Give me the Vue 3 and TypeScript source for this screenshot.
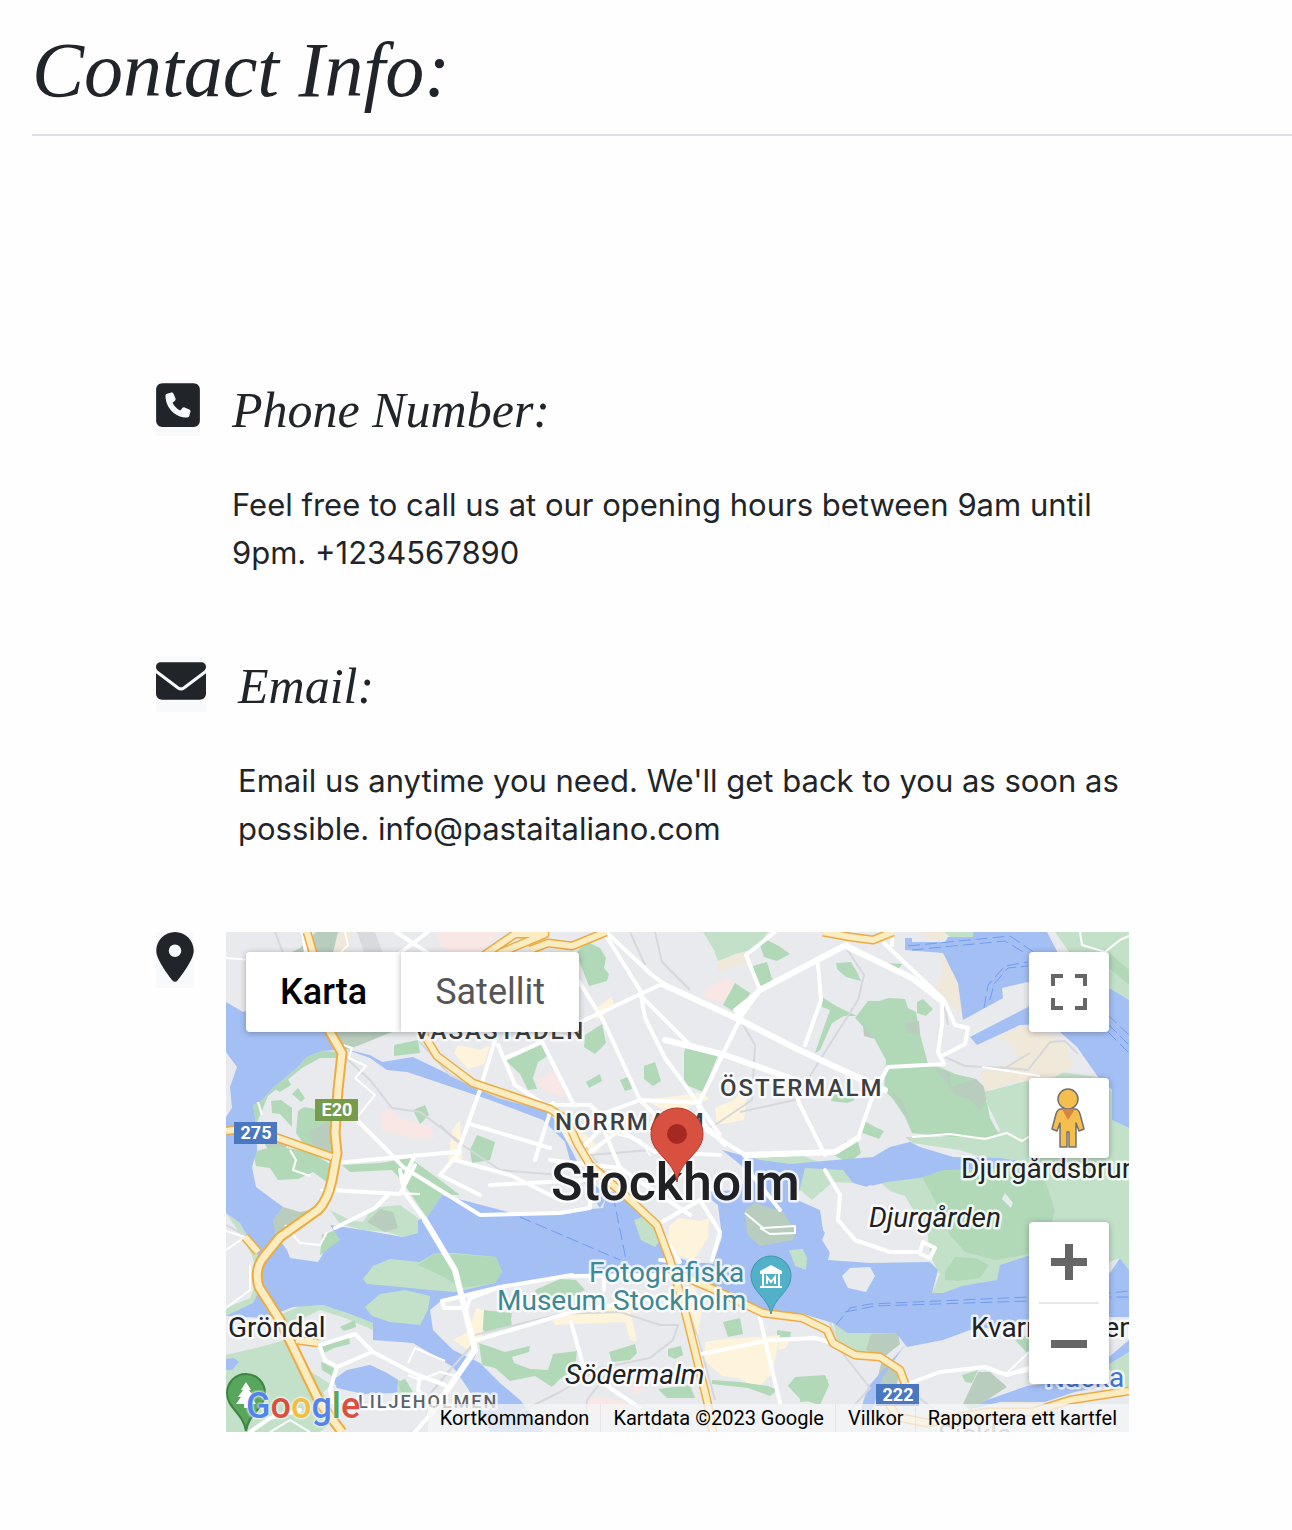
<script setup lang="ts">
import { ref } from 'vue'

interface Shape {
  kind: string
  d: string
}

interface Label {
  kind: string
  x: number
  y: number
  text: string
}

interface Shield {
  x: number
  y: number
  text: string
  color: string
}

const mapType = ref<'map' | 'satellite'>('map')

const areas: Shape[] = [
  // districts north of the water
  { kind: 'sand', d: 'M340 932H352L346 953H333Z' },
  { kind: 'dark', d: 'M316 932H338L333 953H290L300 948Z' },
  { kind: 'rail', d: 'M357 932H375L383 953H364Z' },
  { kind: 'pink', d: 'M436 932H500L480 953H450L440 945Z' },
  { kind: 'park', d: 'M576 953L586 941L600 948L606 958L604 968L609 974L607 981L589 986Z' },
  { kind: 'light', d: 'M703 932H768L756 949L735 954L718 962L714 950Z' },
  { kind: 'sand', d: 'M717 961L735 955L755 949L745 964L731 968L718 972Z' },
  { kind: 'pink', d: 'M706 989L729 977L735 986L722 1003L704 998Z' },
  { kind: 'park', d: 'M735 983L750 993L745 1004L736 1013L723 1005Z' },
  { kind: 'park', d: 'M763 938L779 946L790 954L777 961L764 957L760 945ZM753 966L767 962L773 982L762 988L754 974Z' },
  { kind: 'park', d: 'M836 963L851 962L857 972L861 981L846 977L837 969ZM886 963L902 964L898 970L887 966Z' },
  { kind: 'park', d: 'M822 997L836 1006L857 1016L844 1016L832 1023L820 1050L815 1053L830 1010L822 1007Z' },
  { kind: 'park', d: 'M855 1018L868 1001L879 1001L889 998L905 999L908 1008L916 1012L920 1034L928 1064L942 1068L955 1074L976 1079L987 1103L990 1118L999 1134L981 1140L940 1136L912 1133L905 1117L893 1099L884 1090L886 1060L874 1038Z' },
  { kind: 'dark', d: 'M905 1023L919 1021L920 1034L907 1033ZM863 1025L875 1039L864 1036ZM890 1091L902 1100L912 1124L905 1113ZM935 1068L950 1073L950 1087L976 1079L991 1093L980 1110L970 1100L955 1094Z' },
  { kind: 'park', d: 'M917 1002L923 999L933 1009L926 1016L917 1013Z' },
  { kind: 'park', d: 'M834 1093L850 1094L855 1100L847 1103L831 1101ZM863 1120L875 1127L884 1131L879 1139L860 1132Z' },
  { kind: 'light', d: 'M985 1092L1060 1072L1098 1077L1112 1092V1120L1129 1128V1270L1120 1258L1109 1262L1075 1250L1029 1257L1000 1267L997 1280L962 1288L943 1293L932 1293L940 1274L933 1262L925 1234L900 1200L880 1182L920 1178L940 1166L990 1160L960 1150L912 1143L905 1137H995L1000 1130L987 1103Z' },
  { kind: 'sand', d: 'M940 953L944 953L958 983L963 1020L956 1008L938 998L937 983L943 972ZM920 932H945L946 940H930ZM998 1038L1020 1026L1045 1033L1065 1042L1073 1067L1055 1077L1010 1083L985 1092L980 1072L1000 1068L1018 1058L1012 1044Z' },
  { kind: 'light', d: 'M1055 932H1129V1000L1109 987L1070 953ZM945 932H973L973 937H950Z' },
  { kind: 'park', d: 'M1109 952L1129 970V985L1109 968Z' },
  { kind: 'park', d: 'M922 1177L950 1166L990 1160L1040 1165L1055 1210L1045 1245L1025 1255L995 1260L965 1252L950 1235L940 1210Z' },
  { kind: 'light', d: 'M745 1170L752 1155H800L828 1165L850 1170L853 1183L833 1182L812 1200L800 1190Z' },
  { kind: 'park', d: 'M832 1154L846 1141L858 1142L861 1153L849 1163Z' },
  { kind: 'park', d: 'M684 1053L687 1044L718 1055L703 1092L684 1084ZM506 1061L542 1044L549 1055L538 1062L533 1078L537 1089L528 1090L520 1074ZM586 1082L600 1074L602 1081L589 1088ZM644 1066L655 1062L661 1081L653 1086L644 1079ZM620 1080L630 1076L632 1089L625 1091ZM585 1035L602 1024L606 1043L595 1054L584 1047Z' },
  { kind: 'pink', d: 'M537 1080L555 1070L566 1092L561 1097L541 1089ZM380 1114L389 1109L400 1118L431 1127L435 1138L413 1139L382 1130Z' },
  { kind: 'park', d: 'M470 1150L477 1135L495 1142L490 1160L472 1163ZM413 1110L425 1105L429 1115L420 1124Z' },
  { kind: 'built', d: 'M598 1007L612 996L614 1008L596 1020ZM454 1053L458 1045L480 1050L490 1045L484 1064L468 1069ZM645 1100L700 1093L710 1099L690 1106L680 1118L660 1108ZM715 1108L735 1099L742 1090L748 1080L744 1120L717 1125ZM452 1130L460 1120L462 1160L448 1163ZM553 1130L580 1130L600 1148L590 1160Z' },
  { kind: 'park', d: 'M394 1045L418 1040L420 1053L394 1056Z' },
  { kind: 'dark', d: 'M333 1032H392L360 1045L345 1050Z' },
  // Kungsholmen and the western islands
  { kind: 'park', d: 'M338 1052L322 1051L307 1057L297 1068L273 1088L260 1102L253 1105L256 1125L268 1096L285 1082L302 1068L320 1058L338 1058Z' },
  { kind: 'park', d: 'M271 1101L281 1100L292 1108L292 1127L280 1114L272 1113ZM298 1111L304 1107L333 1112V1154L320 1152L303 1143L296 1133ZM275 1089L288 1079L291 1085L280 1092ZM292 1094L298 1088L305 1098L301 1102Z' },
  { kind: 'dark', d: 'M310 1131L332 1119V1154L314 1151ZM262 1138L290 1140L284 1151L268 1150Z' },
  { kind: 'park', d: 'M253 1152L275 1146L310 1152L332 1165L328 1183L313 1172L298 1179L278 1180L270 1168L256 1166Z' },
  { kind: 'park', d: 'M342 1165L380 1163L410 1158L440 1180L460 1195L442 1195L427 1217L420 1208L403 1182L392 1170L350 1172Z' },
  { kind: 'light', d: 'M330 1210L350 1220L363 1222L372 1208L400 1205L418 1218V1233L403 1237L387 1232L363 1230L340 1224Z' },
  { kind: 'dark', d: 'M273 1220L283 1207L300 1212L315 1209L305 1226L287 1238L274 1233ZM367 1222L380 1209L393 1212L398 1228L385 1232Z' },
  { kind: 'light', d: 'M226 1213L240 1223L257 1253L265 1283L254 1303L226 1316V1308L250 1298L258 1280L252 1255L239 1232Z' },
  { kind: 'park', d: 'M322 1235L336 1230L341 1242L327 1251L320 1255Z' },
  // Södermalm
  { kind: 'park', d: 'M535 1290L560 1279L576 1280L585 1290L562 1302L538 1300ZM500 1315L510 1312L512 1326L500 1328ZM723 1322L740 1318L743 1334L728 1337ZM777 1330L791 1332L790 1338L777 1337ZM478 1316L482 1310L512 1313L510 1326L484 1332Z' },
  { kind: 'built', d: 'M705 1342L725 1339L758 1337L780 1335L775 1360L772 1374L757 1388L738 1378L722 1376L704 1360ZM692 1280L702 1310L697 1340L686 1330ZM552 1318L605 1307L630 1308L637 1342L630 1340L625 1322L555 1325ZM453 1340L468 1332L476 1308L484 1310L482 1340L468 1350ZM780 1340H790L786 1348L778 1350Z' },
  { kind: 'park', d: 'M479 1343L505 1352L530 1346L529 1352L512 1357L514 1363L530 1369L548 1370L553 1354L577 1351L575 1369L560 1379L552 1387L535 1376L510 1381L495 1368L482 1365ZM609 1352L635 1344L637 1353L630 1360L612 1362ZM668 1349L681 1346L683 1355L675 1359L668 1356ZM658 1389L690 1385L695 1398L667 1398ZM795 1377L825 1375L829 1385L820 1405L800 1399L788 1386ZM712 1380L740 1382L768 1386L778 1390L770 1396L748 1388L712 1384Z' },
  { kind: 'pink', d: 'M585 1400L600 1397L625 1401L625 1415H590ZM630 1387L641 1384L644 1391L632 1394Z' },
  // south-western shore
  { kind: 'light', d: 'M226 1355L260 1347L285 1340L305 1368L332 1385L323 1392L335 1420L320 1432H226ZM280 1315L300 1306L325 1305L373 1323V1330L345 1318L320 1310L290 1325ZM336 1382L347 1371L370 1365L387 1373L398 1380L408 1384L412 1396L394 1395L392 1380L370 1370L350 1375Z' },
  { kind: 'park', d: 'M322 1346L349 1337L350 1344L334 1348L324 1353ZM340 1327L355 1320L356 1327L344 1331ZM398 1382L405 1379L413 1392L402 1395ZM321 1362L334 1368L332 1376L322 1370Z' },
  // south-eastern shore
  { kind: 'light', d: 'M833 1323L847 1333L898 1333L899 1343L880 1358L845 1352L838 1343Z' },
  { kind: 'dark', d: 'M871 1334L898 1333L900 1344L884 1357L866 1350ZM882 1360L900 1370L897 1384H876ZM963 1404L978 1372L990 1372L1007 1387L987 1400L970 1410Z' },
  { kind: 'park', d: 'M962 1375L978 1370L972 1383L965 1382ZM1015 1340L1029 1334V1355ZM800 1378L820 1377L828 1380L822 1400L800 1402Z' },
  { kind: 'sand', d: 'M1003 1405L1020 1398L1040 1398L1030 1410L1003 1415Z' },
  { kind: 'light', d: 'M1109 1360L1129 1352V1392H1109Z' },
]

const waters: string[] = [
  'M226 1002L243 1012L262 1005H322L330 1032L338 1050L322 1051L307 1057L297 1068L273 1088L260 1102L253 1105L256 1125L257 1150L252 1167L256 1187L283 1207L273 1220L275 1233L287 1250L290 1258L318 1262L324 1252L340 1240L330 1225L363 1230L403 1237L418 1233V1220L427 1217L442 1195L470 1202L520 1215L603 1208L608 1190L620 1195L655 1225L667 1253L675 1274H572L500 1287L442 1300L430 1310L433 1330L453 1350L480 1363L500 1383L520 1400L533 1417L543 1432H490L477 1403L467 1387L453 1367L433 1355L413 1343L373 1340V1323L347 1313L323 1305L293 1307L265 1318L226 1316L253 1303L263 1283L257 1253L240 1223L226 1213Z',
  'M345 1049L370 1055L382 1062L413 1057L440 1070L480 1090L550 1113L557 1123L573 1153L585 1178L608 1195L600 1208L588 1190L570 1160L565 1142L543 1120L490 1100L440 1083L407 1072L387 1070L370 1058Z',
  'M722 1150L760 1160L790 1164L835 1160L873 1157L890 1147L910 1142L920 1147L953 1157L1000 1158L1030 1163L1000 1168L943 1170L920 1178L887 1182L867 1187L853 1183L843 1170L805 1168L797 1200L820 1210L823 1230L832 1243L828 1260L870 1263L930 1262L938 1270L932 1293H943L962 1286L997 1280L1000 1265L1040 1252L1110 1273L1120 1258L1129 1270V1317L1105 1317L1030 1323L970 1330L943 1340L907 1347L896 1333L847 1333L833 1323L800 1313H773L750 1303L717 1287L672 1268L676 1258L713 1264L722 1237L718 1205L702 1192L740 1190L747 1170Z',
  'M905 938H912V942H945L948 937H973V932H1047L1060 957L1108 987L1129 1000V1128L1112 1120V1090L1098 1077L1077 1047L1060 1032L1045 1024L1020 1025L977 1045L970 1037L1028 1007L1040 985L1027 982L1002 988L1003 998L963 1020L958 983L943 953L905 950Z',
  'M333 1380L347 1370L370 1365L387 1373L398 1380L397 1393L363 1394L337 1388Z',
  'M907 1343L868 1387L860 1412H872L882 1378L900 1352Z',
  'M968 1410L987 1400L1027 1386L1075 1380L1109 1385L1075 1392L1045 1402L1000 1402Z',
  'M1109 1357L1129 1340V1352L1109 1364ZM226 1359L234 1358L239 1362L232 1370H226Z',
]

const islands: Shape[] = [
  { kind: 'light', d: 'M363 1279L373 1266L390 1259L420 1262L435 1253L455 1253L496 1257L502 1272L495 1283L455 1292L430 1290L390 1286L367 1284Z' },
  { kind: 'park', d: 'M418 1265L435 1253L496 1257L502 1272L495 1283L462 1288L440 1275Z' },
  { kind: 'light', d: 'M365 1307L380 1294L405 1290L430 1296L428 1310L420 1325L390 1322L372 1316Z' },
  { kind: 'light', d: 'M634 1220L642 1217L660 1225L662 1238L655 1247L641 1240Z' },
  { kind: 'dark', d: 'M745 1209L755 1203L783 1212L796 1232L793 1240L760 1246L747 1234Z' },
  { kind: 'light', d: 'M789 1250L803 1249L807 1258L806 1270L795 1266Z' },
  { kind: 'land', d: 'M662 1222L672 1212L700 1200L715 1214L720 1234L713 1262L690 1264L673 1250Z' },
  { kind: 'built', d: 'M669 1226L679 1218L700 1221L709 1218L708 1238L694 1260L680 1256L668 1245Z' },
  { kind: 'land', d: 'M842 1276L850 1268L870 1267L875 1276L866 1292L848 1288Z' },
  { kind: 'park', d: 'M945 1272L955 1257L975 1258L989 1265L980 1278L958 1281L945 1280Z' },
  { kind: 'land', d: 'M1005 1193L1013 1203L1011 1208L1002 1199ZM822 1240L838 1200L870 1185L905 1196L928 1235L929 1260L870 1260L832 1256Z' },
  { kind: 'dark', d: 'M470 1353L478 1347L474 1360Z' },
  { kind: 'land', d: 'M226 1052L237 1067L230 1087L232 1108L226 1117Z' },
]

const railways: string[] = [
  'M275 932L283 953', 'M345 1057L370 1080L392 1108L420 1112L460 1142', 'M418 1040L450 1075L500 1098L560 1112L610 1180',
  'M655 932L662 962L690 990', 'M630 932L645 965', 'M738 1016L755 1045L752 1100L715 1125L650 1150L590 1155',
  'M846 948L864 975L858 1000L820 1060L795 1100L740 1112', 'M945 1057L965 1066L1005 1068L1030 1053M1000 1067L1028 1070L1050 1042L1065 1041L1078 1054',
  'M890 948L944 1002L948 1025', 'M475 1335L560 1314L620 1312L660 1325L678 1325L673 1340L650 1358L600 1368L560 1392L520 1412',
  'M425 1400L450 1370L475 1342L500 1332', 'M690 1315L700 1345L715 1400', 'M830 1322L840 1350L870 1388L850 1410', 'M226 1225L245 1235',
  'M585 1432L587 1400L610 1370', 'M440 1125L455 1140L500 1170L560 1175', 'M910 1390L940 1415',
]

const sideStreets: string[] = [
  'M226 958L250 960', 'M345 932L348 945L340 953', 'M343 1045L352 1048L349 1058L366 1066L355 1078L375 1095L355 1120',
  'M258 1102L262 1115M290 1150L296 1160L293 1170L310 1176', 'M226 1250L245 1237L226 1231M250 1265V1290L226 1308',
  'M285 1225L300 1243L320 1245L327 1232', 'M320 1190L420 1194', 'M408 1363L415 1348L445 1361',
  'M320 1405L350 1400L380 1410L420 1405L400 1400', 'M912 1137L950 1134L985 1139L1007 1133L1022 1141L1030 1136',
  'M982 1067L1040 1076', 'M1080 932L1082 945L1105 952L1120 940L1129 936', 'M1007 1375L1029 1371M1007 1373L1029 1352',
  'M745 1213L763 1228L795 1226L795 1233L770 1234L760 1228', 'M600 1130L640 1140L650 1155', 'M408 1375L420 1380L440 1372L455 1376', 'M270 1432L290 1420L310 1432',
]

const streets: string[] = [
  'M303 932L306 953', 'M396 932L428 953M428 932L400 953', 'M606 932L652 975L670 988L740 1020L795 1048L860 1080L885 1090',
  'M578 980L603 1020L640 1100L660 1120', 'M605 934L640 990L645 1018L665 1058L685 1085L720 1135', 'M578 1023L600 1013L662 984',
  'M640 995L690 1045L725 1055L790 1078L800 1105L825 1155', 'M775 932L746 955L760 990L742 1015L720 1060L698 1105L706 1130L745 1155',
  'M846 945L760 990L735 1010', 'M818 965L821 1000L805 1045', 'M848 947L890 967L912 978L942 1001L942 1025L938 1052L944 1064L888 1067L873 1095L858 1138L835 1152L750 1156',
  'M884 943L944 1000L955 1025L968 1028L965 1044L944 1055', 'M892 932V945', 'M495 1040L480 1090L455 1160L510 1175L560 1200',
  'M498 1045L515 1085L545 1105L590 1105L600 1115L640 1100L700 1103', 'M505 1058L542 1042L573 1103', 'M553 1103L535 1160M470 1124L550 1148',
  'M335 1163L455 1152', 'M355 1118L390 1153L403 1167L480 1215L560 1213L590 1208L590 1190M415 1155L403 1180', 'M330 1190L400 1194L415 1165',
  'M335 1228L375 1208L388 1195', 'M400 1170L404 1192L425 1220L455 1270L475 1350L430 1415L415 1432', 'M572 1275L500 1287L442 1301L444 1308L467 1308L470 1298L500 1287',
  'M477 1340L572 1312L670 1295', 'M604 1275V1290M571 1322L583 1365L610 1388L640 1408', 'M697 1355L770 1340L815 1338L840 1345', 'M758 1310L780 1403', 'M695 1337L710 1400',
  'M550 1160L620 1168L690 1215', 'M590 1152L620 1130L655 1152L720 1155', 'M662 1222L700 1200L720 1232L712 1260', 'M663 1235L680 1262L660 1260',
  'M745 1155L752 1175L780 1210M700 1120L725 1145', 'M825 1170L840 1195L838 1220L855 1240L890 1252H920L923 1242L935 1248L930 1258L920 1254', 'M320 1345L355 1334L373 1352L415 1374L445 1385',
  'M320 1347L325 1360L337 1367L330 1390L332 1400', 'M337 1367L372 1352M420 1375L418 1390L430 1405', 'M905 1385L940 1372L985 1367L1007 1375L1029 1368', 'M250 1432L270 1418L300 1410',
  'M590 1105L608 1122L580 1150', 'M603 1128L620 1168', 'M460 1152L440 1175L480 1195', 'M490 1185L590 1180L620 1170', 'M572 1276L670 1275',
]

const avenues: string[] = [
  'M662 984L740 1020L795 1048L885 1090', 'M665 1040L725 1055L790 1078', 'M846 945L760 990L738 1013', 'M425 1220L455 1270L475 1350L430 1415',
  'M745 1155L835 1152L858 1138', 'M848 947L912 978L942 1001',
]

const highways: string[] = [
  'M307 932L313 953', 'M226 1131L240 1129L275 1137L332 1157',
  'M418 1025L437 1056L473 1083L550 1109L567 1120L577 1143L590 1165L627 1197L657 1225L670 1260L683 1303L693 1343L707 1400L713 1432',
  'M483 956L515 934H545L500 953', 'M530 950L548 943L572 946L606 932', 'M823 932L850 937L873 940L893 932',
  'M680 1275L713 1289L763 1313L802 1318L827 1330L833 1343L855 1355L880 1357L900 1370L905 1384', 'M889 1404L897 1417L927 1423L987 1412L1032 1412L1070 1400L1129 1391',
  'M258 1252L245 1237', 'M296 1340L318 1343',
]

const motorway = 'M324 1010L330 1032L342 1053L338 1090L335 1133L337 1153L332 1180Q328 1200 318 1210L280 1237L263 1258Q254 1270 259 1287L280 1320L320 1403L342 1432'

const ferries: string[] = [
  'M520 1217L620 1260', 'M613 1195L627 1265', 'M908 946L1010 936L1035 953', 'M912 950L1005 941L1025 953',
  'M984 1008L988 985L1005 966L1028 962', 'M990 1000L994 984L1008 968L1028 966', 'M836 1325L850 1308L870 1304L1029 1297H1129', 'M845 1312L875 1306L1029 1301L1129 1291',
  'M1108 1015L1129 1035M1108 1024L1129 1045M1108 1032L1129 1053',
]

const labels: Label[] = [
  { kind: 'district', x: 414, y: 1039, text: 'VASASTADEN' },
  { kind: 'district', x: 555, y: 1130, text: 'NORRMALM' },
  { kind: 'district', x: 720, y: 1096, text: 'ÖSTERMALM' },
  { kind: 'suburb', x: 358, y: 1408, text: 'LILJEHOLMEN' },
  { kind: 'city', x: 551, y: 1200, text: 'Stockholm' },
  { kind: 'place', x: 961, y: 1178, text: 'Djurgårdsbrunn' },
  { kind: 'place', x: 228, y: 1337, text: 'Gröndal' },
  { kind: 'place', x: 971, y: 1337, text: 'Kvarnholmen' },
  { kind: 'island', x: 869, y: 1227, text: 'Djurgården' },
  { kind: 'island', x: 565, y: 1384, text: 'Södermalm' },
  { kind: 'museum', x: 589, y: 1282, text: 'Fotografiska' },
  { kind: 'museum', x: 497, y: 1310, text: 'Museum Stockholm' },
  { kind: 'nacka', x: 1045, y: 1387, text: 'Nacka' },
  { kind: 'sickla', x: 938, y: 1444, text: 'Sickla' },
]

const shields: Shield[] = [
  { x: 315, y: 1099, text: 'E20', color: '#759b4b' },
  { x: 234, y: 1122, text: '275', color: '#4a78c0' },
  { x: 876, y: 1384, text: '222', color: '#4a78c0' },
]
</script>

<template>
  <main class="page">
    <header class="page-header">
      <h1>Contact Info:</h1>
    </header>

    <section class="contacts">
      <article class="contact">
        <span class="icon">
          <svg class="icon-phone" viewBox="0 0 448 512" aria-hidden="true">
            <path d="M64 32C28.7 32 0 60.7 0 96V416c0 35.3 28.7 64 64 64H384c35.3 0 64-28.7 64-64V96c0-35.3-28.7-64-64-64H64zm90.7 96.7c9.7-2.6 19.9 2.3 23.7 11.6l20 48c3.4 8.2 1 17.6-5.8 23.2L168 231.7c16.6 35.2 45.1 63.7 80.3 80.3l20.2-24.7c5.6-6.8 15-9.2 23.2-5.8l48 20c9.3 3.9 14.2 14 11.6 23.7l-12 44C336.9 378 329 384 320 384C196.3 384 96 283.7 96 160c0-9 6-16.9 14.7-19.3l44-12z" />
          </svg>
        </span>
        <div class="details">
          <h2>Phone Number:</h2>
          <p>Feel free to call us at our opening hours between 9am until 9pm. +1234567890</p>
        </div>
      </article>

      <article class="contact">
        <span class="icon">
          <svg class="icon-mail" viewBox="0 0 512 512" aria-hidden="true">
            <path d="M48 64C21.5 64 0 85.5 0 112c0 15.1 7.1 29.3 19.2 38.4L236.8 313.6c11.4 8.5 27 8.5 38.4 0L492.8 150.4c12.1-9.1 19.2-23.3 19.2-38.4c0-26.5-21.5-48-48-48H48zM0 176V384c0 35.3 28.7 64 64 64H448c35.3 0 64-28.7 64-64V176L294.4 339.2c-22.8 17.1-54 17.1-76.8 0L0 176z" />
          </svg>
        </span>
        <div class="details">
          <h2>Email:</h2>
          <p>Email us anytime you need. We'll get back to you as soon as possible. info@pastaitaliano.com</p>
        </div>
      </article>

      <article class="contact">
        <span class="icon">
          <svg class="icon-pin" viewBox="0 0 384 512" aria-hidden="true">
            <path d="M215.7 499.2C267 435 384 279.4 384 192C384 86 298 0 192 0S0 86 0 192c0 87.4 117 243 168.3 307.2c12.3 15.3 35.1 15.3 47.4 0zM192 128a64 64 0 1 1 0 128 64 64 0 1 1 0-128z" />
          </svg>
        </span>

        <div class="map">
          <svg class="canvas" viewBox="226 932 903 500" preserveAspectRatio="xMidYMid slice">
            <path v-for="area in areas" :key="area.d" :class="area.kind" :d="area.d" />
            <path v-for="d in waters" :key="d" class="water" :d="d" />
            <path v-for="area in islands" :key="area.d" :class="area.kind" :d="area.d" />
            <path v-for="d in railways" :key="d" class="railway" :d="d" />
            <path v-for="d in ferries" :key="d" class="ferry" :d="d" />
            <path v-for="d in sideStreets" :key="d" class="side-street" :d="d" />
            <path v-for="d in streets" :key="d" class="street" :d="d" />
            <path v-for="d in avenues" :key="d" class="avenue" :d="d" />
            <path v-for="d in highways" :key="d" class="highway-edge" :d="d" />
            <path class="motorway-edge" :d="motorway" />
            <path v-for="d in highways" :key="d" class="highway" :d="d" />
            <path class="motorway" :d="motorway" />

            <g v-for="shield in shields" :key="shield.text">
              <rect :x="shield.x" :y="shield.y" width="43" height="22" :fill="shield.color" />
              <text class="shield" :x="shield.x + 22" :y="shield.y + 17">{{ shield.text }}</text>
            </g>

            <!-- nature reserve pin -->
            <path fill="#58a55c" stroke="#3f8444" stroke-width="2" d="M246 1431C243 1412 227 1409 227 1393A19 19 0 0 1 265 1393C265 1409 249 1412 246 1431Z" />
            <path fill="#fff" d="M246 1382L251 1390H249L254 1397H251L256 1404H248V1408H244V1404H236L241 1397H238L243 1390H241Z" />

            <text v-for="label in labels" :key="label.text" :class="['label', label.kind]" :x="label.x" :y="label.y">{{ label.text }}</text>

            <!-- museum pin -->
            <path fill="#52b0c8" stroke="#4097ac" stroke-width="1" d="M771 1314C768 1297 751 1292 751 1276A20 20 0 0 1 791 1276C791 1292 774 1297 771 1314Z" />
            <path fill="#fff" fill-rule="evenodd" d="M771 1265L782 1271V1274H780V1286H782V1288H760V1286H762V1274H760V1271ZM764 1274V1286H778V1274Z" />
            <path fill="none" stroke="#fff" stroke-width="2" d="M767 1284V1277L771 1282L775 1277V1284" />

            <!-- restaurant marker -->
            <path fill="#d85140" stroke="#b1372b" stroke-width="1" d="M677 1182C674 1159 651 1154 651 1134A26 26 0 0 1 703 1134C703 1154 680 1159 677 1182Z" />
            <circle cx="677" cy="1134" r="10" fill="#a52921" />
          </svg>

          <div class="map-types">
            <button type="button" :class="{ active: mapType === 'map' }" @click="mapType = 'map'">Karta</button>
            <button type="button" :class="{ active: mapType === 'satellite' }" @click="mapType = 'satellite'">Satellit</button>
          </div>

          <div class="tools">
            <button type="button" class="tool fullscreen" aria-label="Helskärm">
              <svg width="36" height="36" viewBox="0 0 18 18" aria-hidden="true">
                <path fill="#666" d="M0 0V6H2V2H6V0ZM12 0V2H16V6H18V0ZM16 16H12V18H18V12H16ZM2 12H0V18H6V16H2Z" />
              </svg>
            </button>
            <button type="button" class="tool pegman" aria-label="Street View">
              <svg width="36" height="64" viewBox="0 0 36 64" aria-hidden="true">
                <g fill="#f4bf4f" stroke="#707070" stroke-width="1.5" stroke-linejoin="round">
                  <path d="M10 23H24C27 23 28 25 29 28L33 43L28 45L25 37V61H18V46H16V61H9V37L6 45L1 43L5 28C6 25 7 23 10 23Z" />
                  <circle cx="17" cy="13" r="10" />
                </g>
                <path fill="#d48443" d="M11 23H24L17 34Z" />
              </svg>
            </button>
            <div class="zoom">
              <button type="button" aria-label="Zooma in">
                <svg width="36" height="36" viewBox="0 0 18 18" aria-hidden="true">
                  <path fill="#666" d="M7 0H11V7H18V11H11V18H7V11H0V7H7Z" />
                </svg>
              </button>
              <button type="button" aria-label="Zooma ut">
                <svg width="36" height="36" viewBox="0 0 18 18" aria-hidden="true">
                  <path fill="#666" d="M0 7H18V11H0Z" />
                </svg>
              </button>
            </div>
          </div>

          <a class="brand" href="#" aria-label="Google"><span class="blue">G</span><span class="red">o</span><span class="yellow">o</span><span class="blue">g</span><span class="green">l</span><span class="red">e</span></a>

          <div class="credits">
            <button type="button">Kortkommandon</button>
            <span>Kartdata ©2023 Google</span>
            <a href="#">Villkor</a>
            <a href="#">Rapportera ett kartfel</a>
          </div>
        </div>
      </article>
    </section>
  </main>
</template>

<style>
body {
  margin: 0;
  background: #fefefe;
}
</style>

<style scoped>
.page {
  color: #212529;
  font-family: Inter, "Liberation Sans", sans-serif;
}

.page-header {
  margin-left: 32px;
  padding: 24px 0 18px;
  border-bottom: 2px solid #dee2e6;
}

h1,
h2 {
  margin: 0;
  font-family: "Apple Chancery", "Liberation Serif", serif;
  font-style: italic;
  font-weight: 400;
}

h1 {
  font-size: 78px;
  line-height: 92px;
}

h2 {
  font-size: 50px;
  line-height: 60px;
}

.contacts {
  display: flex;
  flex-direction: column;
  gap: 79px;
  margin: 244px 163px 0 156px;
}

.contact {
  display: flex;
  align-items: flex-start;
  gap: 32px;
}

.icon {
  flex: none;
  height: 56px;
  background: #f8f9fa;
}

.icon svg {
  display: block;
  height: 50px;
  fill: #212529;
}

.icon-phone {
  width: 44px;
}

.icon-mail {
  width: 50px;
}

.icon-pin {
  width: 38px;
}

.details {
  flex: 1;
  min-width: 0;
}

p {
  margin: 41px 0 0;
  font-size: 31px;
  line-height: 48px;
}

.map {
  position: relative;
  flex: 1;
  min-width: 0;
  height: 500px;
  overflow: hidden;
  background: #e8eaed;
  font-family: Roboto, "Liberation Sans", sans-serif;
}

.canvas {
  display: block;
  width: 100%;
  height: 100%;
}

.land { fill: #e8eaed; }
.water { fill: #a3bff4; }
.park { fill: #b1d9b8; }
.light { fill: #c3e1c9; }
.dark { fill: #b8cdbe; }
.sand { fill: #f0e8d9; }
.pink { fill: #f8e7e4; }
.built { fill: #fef4dc; }
.rail { fill: #d8dadd; }

.railway,
.ferry,
.side-street,
.street,
.avenue,
.highway-edge,
.highway,
.motorway-edge,
.motorway {
  fill: none;
  stroke-linejoin: round;
}

.railway {
  stroke: #d6d8db;
  stroke-width: 2px;
}

.ferry {
  stroke: #739bee;
  stroke-width: 1px;
  stroke-dasharray: 12 5;
}

.side-street {
  stroke: #fff;
  stroke-width: 2px;
}

.street {
  stroke: #fff;
  stroke-width: 4px;
  stroke-linecap: round;
}

.avenue {
  stroke: #fff;
  stroke-width: 6px;
  stroke-linecap: round;
}

.highway-edge {
  stroke: #edac41;
  stroke-width: 9px;
}

.highway {
  stroke: #fcecc2;
  stroke-width: 6px;
}

.motorway-edge {
  stroke: #edac41;
  stroke-width: 11px;
}

.motorway {
  stroke: #fcecc2;
  stroke-width: 7px;
}

.label {
  fill: #202124;
  stroke: #fff;
  stroke-opacity: 0.8;
  stroke-width: 5px;
  stroke-linejoin: round;
  paint-order: stroke;
}

.district {
  fill: #3c4043;
  font-size: 24px;
  font-weight: 500;
  letter-spacing: 2px;
}

.suburb {
  fill: #5f6368;
  font-size: 18px;
  font-weight: 500;
  letter-spacing: 2px;
}

.city {
  font-size: 52px;
  font-weight: 500;
}

.place,
.island,
.museum,
.nacka,
.sickla {
  font-size: 28px;
}

.island {
  font-style: italic;
}

.museum {
  fill: #3e8894;
}

.nacka {
  fill: #3f73dd;
}

.sickla {
  fill: #80868b;
}

.shield {
  fill: #fff;
  font-size: 18px;
  font-weight: 700;
  text-anchor: middle;
}

button {
  margin: 0;
  padding: 0;
  border: 0;
  background: #fff;
  font-family: inherit;
  cursor: pointer;
}

.map-types {
  position: absolute;
  top: 20px;
  left: 20px;
  display: flex;
}

.map-types button {
  padding: 0 34px;
  font-size: 36px;
  line-height: 80px;
  color: #565656;
  box-shadow: 0 1px 6px rgba(0, 0, 0, 0.3);
}

.map-types button:first-child {
  border-radius: 4px 0 0 4px;
}

.map-types button:last-child {
  border-radius: 0 4px 4px 0;
}

.map-types .active {
  color: #000;
  font-weight: 500;
}

.tools {
  position: absolute;
  top: 20px;
  right: 20px;
  display: flex;
  flex-direction: column;
  width: 80px;
}

.tool,
.zoom {
  border-radius: 4px;
  background: #fff;
  box-shadow: 0 1px 6px rgba(0, 0, 0, 0.3);
}

.tool,
.zoom button {
  display: flex;
  align-items: center;
  justify-content: center;
  height: 80px;
}

.pegman {
  margin-top: 46px;
}

.zoom {
  display: flex;
  flex-direction: column;
  align-items: center;
  margin-top: 64px;
}

.zoom button {
  width: 60px;
}

.zoom button + button {
  height: 82px;
  border-top: 2px solid #e6e6e6;
}

.brand {
  position: absolute;
  bottom: 4px;
  left: 20px;
  font-size: 36px;
  font-weight: 500;
  line-height: 44px;
  text-decoration: none;
  text-shadow: 0 0 3px #fff, 0 0 3px #fff;
}

.blue { color: #5383ec; }
.red { color: #d85140; }
.yellow { color: #f1be42; }
.green { color: #58a55c; }

.credits {
  position: absolute;
  right: 0;
  bottom: 0;
  display: flex;
  background: rgba(245, 245, 245, 0.75);
  color: #000;
  font-size: 20px;
  line-height: 28px;
}

.credits > * {
  padding: 0 12px;
  background: none;
  color: inherit;
  font-size: inherit;
  line-height: inherit;
  text-decoration: none;
  white-space: nowrap;
}

.credits > * + * {
  box-shadow: -1px 0 #e4e5e8;
}
</style>
